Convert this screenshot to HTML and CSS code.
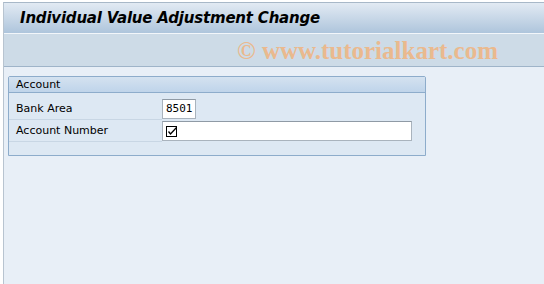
FILE: index.html
```html
<!DOCTYPE html>
<html lang="en">
<head>
    <meta charset="UTF-8">
    <title>Individual Value Adjustment Change</title>
    <link rel="stylesheet" href="styles.css">
</head>
<body>
    <div class="tela">
        <div class="titulo">
            <h1>Individual Value Adjustment Change</h1>
        </div>
        <div class="barra">
            <span class="marca">© www.tutorialkart.com</span>
        </div>
        <div class="conteudo">
            <div class="grupo">
                <div class="grupo-cabecalho">Account</div>
                <div class="linhas">
                    <div class="linha">
                        <label>Bank Area</label>
                        <div class="campo curto">8501</div>
                    </div>
                    <div class="linha">
                        <label>Account Number</label>
                        <div class="campo longo">
                            <svg width="11" height="11" viewBox="0 0 11 11">
                                <rect x="0.5" y="0.5" width="10" height="10" fill="none" stroke="#000"/>
                                <path d="M2.5 5.5 L4.5 8 L10.5 1.5" fill="none" stroke="#000" stroke-width="1.3"/>
                            </svg>
                        </div>
                    </div>
                </div>
            </div>
        </div>
    </div>
</body>
</html>
```

FILE: styles.css
```css
* {
    margin: 0;
    padding: 0;
    box-sizing: border-box;
}

body {
    font-family: Tahoma, "DejaVu Sans", sans-serif;
    background-color: #fff;
    width: 544px;
    height: 284px;
    overflow: hidden;
}

.tela {
    margin-left: 3px;
    margin-top: 2px;
    height: 282px;
    border-left: 1px solid #b8c4d0;
    border-top: 1px solid #a8b8c8;
    background-color: #e8eff7;
    display: flex;
    flex-direction: column;
}

.titulo {
    height: 31px;
    background: linear-gradient(#e2eaf3, #aec5dc);
    border-bottom: 1px solid #f2f6fa;
    padding-left: 16px;
    display: flex;
    align-items: center;
}

.titulo h1 {
    font-family: "DejaVu Sans", sans-serif;
    font-size: 15px;
    font-style: italic;
    font-weight: bold;
    color: #000;
    letter-spacing: -0.2px;
}

.barra {
    height: 33px;
    background-color: #cddbe7;
    border-bottom: 1px solid #9fb4c9;
    padding-left: 233px;
    display: flex;
    align-items: center;
}

.marca {
    font-family: "Liberation Serif", serif;
    font-weight: bold;
    font-size: 25px;
    color: #eab98e;
    padding-top: 2px;
}

.conteudo {
    padding: 9px 0 0 4px;
}

.grupo {
    width: 418px;
    height: 80px;
    border: 1px solid #8daccb;
    background-color: #dde8f3;
    border-radius: 2px 2px 0 0;
}

.grupo-cabecalho {
    height: 16px;
    background: linear-gradient(#d4e2f0, #bfd4ea);
    border-bottom: 1px solid #8daccb;
    line-height: 15px;
    padding-left: 7px;
    color: #000;
    font-family: "DejaVu Sans", sans-serif;
    font-size: 11px;
}

.linhas {
    padding-top: 5px;
}

.linha {
    display: flex;
    align-items: center;
    height: 22px;
}

.linha label {
    width: 153px;
    height: 22px;
    padding-left: 7px;
    line-height: 22px;
    font-size: 11px;
    color: #000;
    border-bottom: 1px solid #c8d6e4;
}

.campo {
    height: 20px;
    background-color: #fff;
    border: 1px solid #a9b3bd;
    border-top-color: #8f9aa5;
    font-family: "DejaVu Sans Mono", monospace;
    font-size: 11px;
    line-height: 18px;
    padding-left: 3px;
    color: #000;
}

.curto {
    width: 34px;
}

.longo {
    width: 250px;
    display: flex;
    align-items: center;
}
```
